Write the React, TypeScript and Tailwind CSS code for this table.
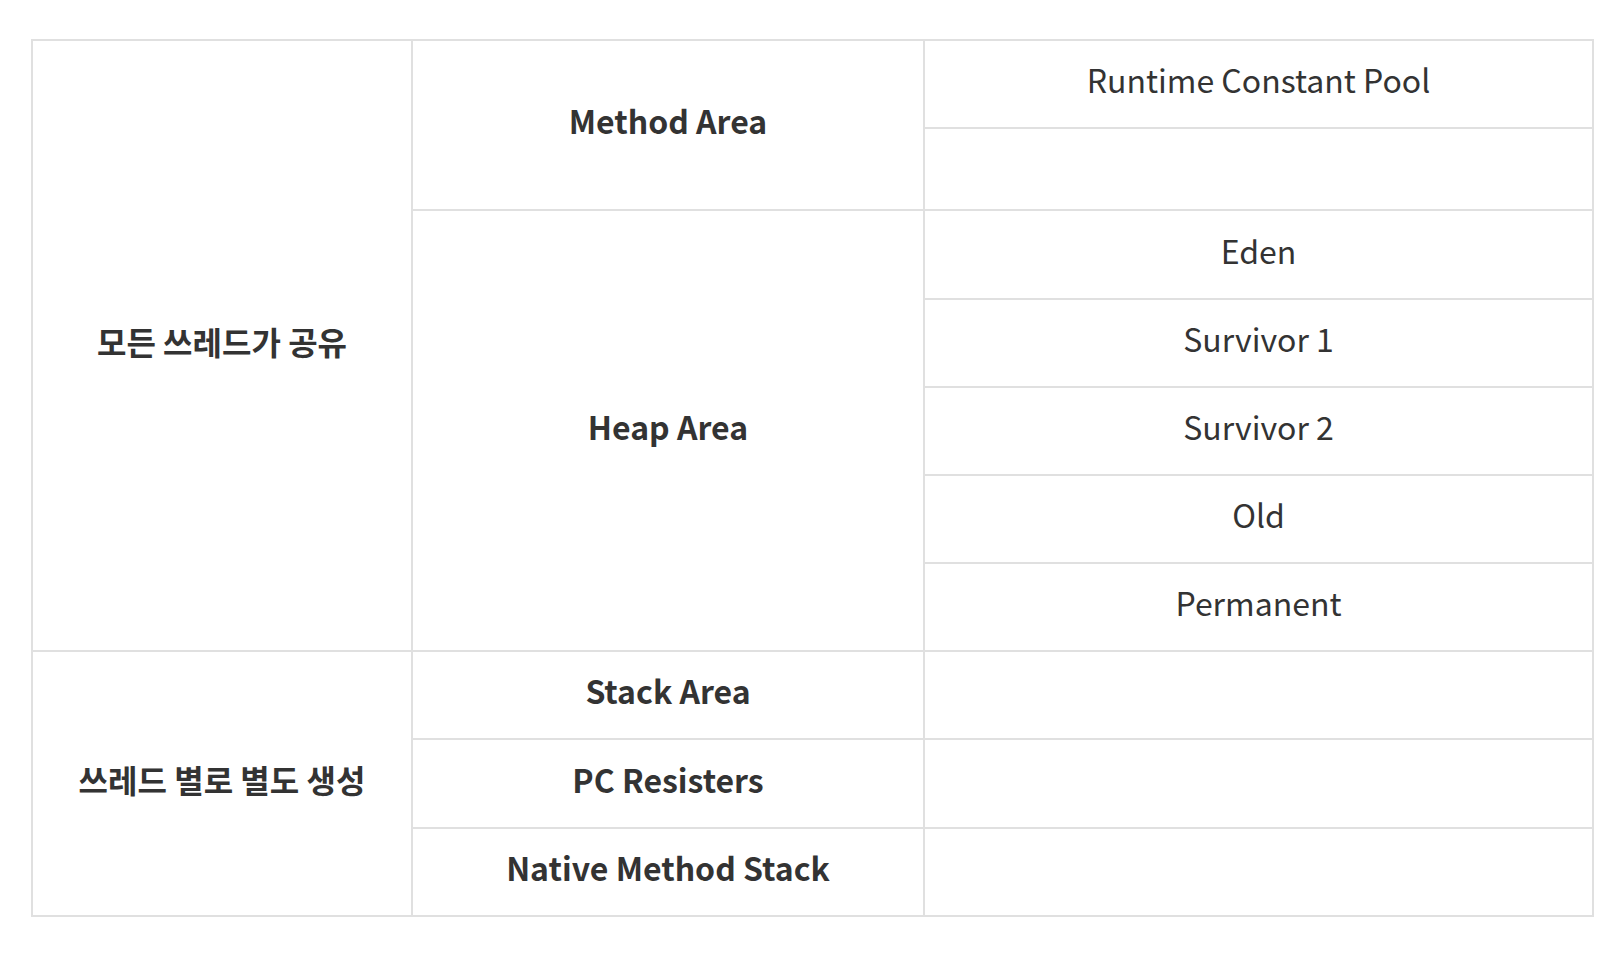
import React from "react";

type Cell = {
  text?: string;
  bold?: boolean;
  col: string;
  row: string;
};

const cells: Cell[] = [
  { text: "모든 쓰레드가 공유", bold: true, col: "col-start-1", row: "row-start-1 row-span-7" },
  { text: "Method Area", bold: true, col: "col-start-2", row: "row-start-1 row-span-2" },
  { text: "Runtime Constant Pool", col: "col-start-3", row: "row-start-1" },
  { col: "col-start-3", row: "row-start-2" },
  { text: "Heap Area", bold: true, col: "col-start-2", row: "row-start-3 row-span-5" },
  { text: "Eden", col: "col-start-3", row: "row-start-3" },
  { text: "Survivor 1", col: "col-start-3", row: "row-start-4" },
  { text: "Survivor 2", col: "col-start-3", row: "row-start-5" },
  { text: "Old", col: "col-start-3", row: "row-start-6" },
  { text: "Permanent", col: "col-start-3", row: "row-start-7" },
  { text: "쓰레드 별로 별도 생성", bold: true, col: "col-start-1", row: "row-start-8 row-span-3" },
  { text: "Stack Area", bold: true, col: "col-start-2", row: "row-start-8" },
  { col: "col-start-3", row: "row-start-8" },
  { text: "PC Resisters", bold: true, col: "col-start-2", row: "row-start-9" },
  { col: "col-start-3", row: "row-start-9" },
  { text: "Native Method Stack", bold: true, col: "col-start-2", row: "row-start-10" },
  { col: "col-start-3", row: "row-start-10" },
];

export default function App() {
  return (
    <div
      className="min-h-screen bg-white pl-[31px] pt-[39px]"
      style={{ fontFamily: '"Noto Sans CJK KR", "Noto Sans", sans-serif' }}
    >
      <div className="grid w-fit grid-cols-[378px_510px_667px] grid-rows-[86px_80px_87px_86px_86px_86px_86px_86px_87px_86px] gap-[2px] border-2 border-[#e0e0e0] bg-[#e0e0e0]">
        {cells.map((c, i) => (
          <div
            key={i}
            className={`${c.col} ${c.row} flex items-center justify-center bg-white pb-[10px] text-[32px] leading-none text-[#333333] ${
              c.bold ? "font-bold" : "font-normal"
            }`}
          >
            {c.text}
          </div>
        ))}
      </div>
    </div>
  );
}
